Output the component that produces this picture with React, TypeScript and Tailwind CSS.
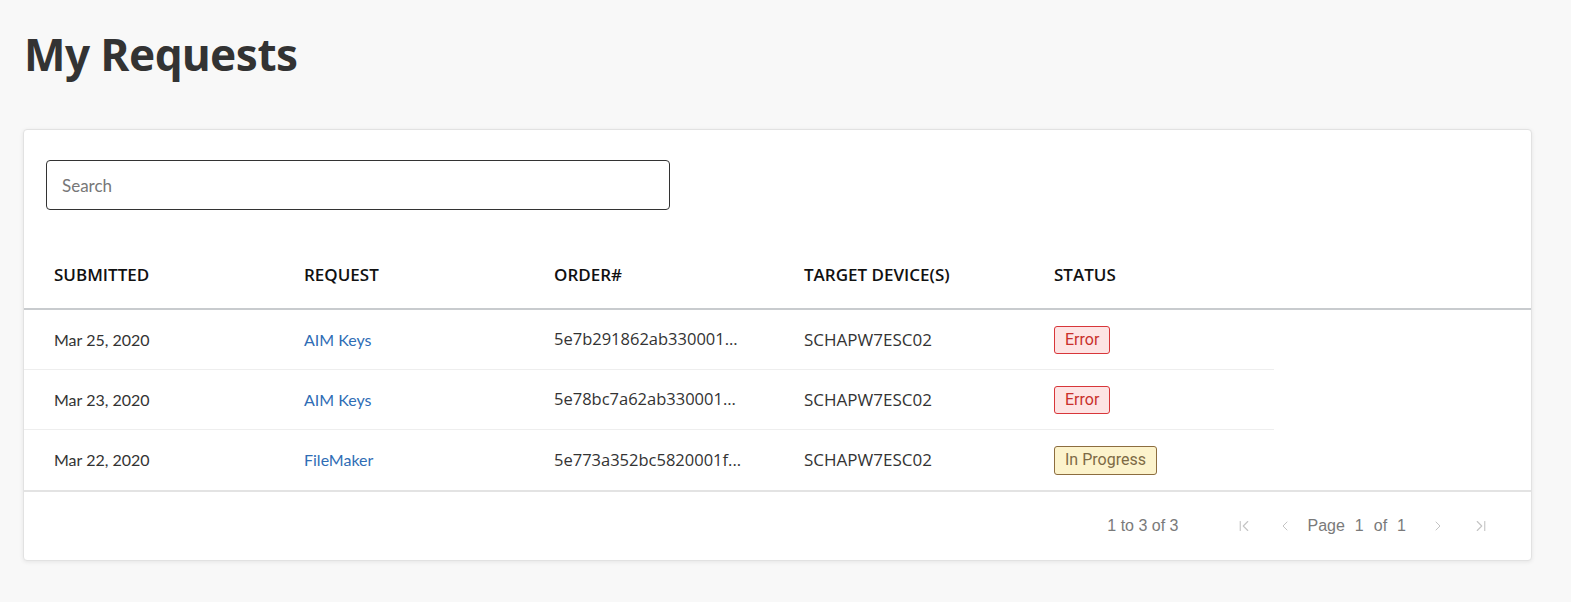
import { ChevronLeft, ChevronRight, ChevronFirst, ChevronLast } from 'lucide-react'

interface RequestRow {
  submitted: string,
  request: string,
  order: string,
  device: string,
  status: 'Error' | 'In Progress',
}

const rows: RequestRow[] = [
  { submitted: 'Mar 25, 2020', request: 'AIM Keys', order: '5e7b291862ab330001...', device: 'SCHAPW7ESC02', status: 'Error' },
  { submitted: 'Mar 23, 2020', request: 'AIM Keys', order: '5e78bc7a62ab330001...', device: 'SCHAPW7ESC02', status: 'Error' },
  { submitted: 'Mar 22, 2020', request: 'FileMaker', order: '5e773a352bc5820001f...', device: 'SCHAPW7ESC02', status: 'In Progress' },
]

const headers = ['SUBMITTED', 'REQUEST', 'ORDER#', 'TARGET DEVICE(S)', 'STATUS']

const StatusBadge = ({ status }: { status: RequestRow['status'] }) => {
  if (status === 'Error') {
    return (
      <span className="inline-flex h-[28px] items-center rounded-[3px] border border-[#d8363a] bg-[#fde4e4] px-[10px] text-[16px] text-[#c9302c] font-['Roboto',sans-serif]">
        Error
      </span>
    )
  }
  return (
    <span className="inline-flex h-[29px] items-center rounded-[3px] border border-[#8c6d3f] bg-[#fcf3cc] px-[10px] text-[16px] text-[#7d6a45] font-['Roboto',sans-serif]">
      In Progress
    </span>
  )
}

const App = () => {
  return (
    <div className="min-h-[602px] w-full bg-[#f8f8f8] pt-[22px] pl-[23px]">
      <h1 className="pl-[1px] text-[44px] leading-[64px] font-bold tracking-[-0.5px] text-[#333333] font-['Noto_Sans',sans-serif]">
        My Requests
      </h1>

      <div className="mt-[43px] w-[1509px] rounded-[4px] border border-[#e2e2e2] bg-white shadow-[0_1px_4px_rgba(0,0,0,0.08)]">
        <div className="pl-[22px] pt-[30px]">
          <input
            name="search-requests"
            type="text"
            placeholder="Search"
            className="h-[50px] w-[624px] rounded-[4px] border border-[#333333] px-[15px] text-[17px] text-[#333] outline-none placeholder:text-[#777777] font-['Lato',sans-serif]"
          />
        </div>

        <div className="mt-[28px] flex h-[72px] items-center border-b-2 border-[#c8cbce]">
          {headers.map((h) => (
            <div key={h} className="w-[250px] pl-[30px] pt-[4px] text-[17px] font-semibold text-[#111111] font-['Open_Sans',sans-serif]">
              {h}
            </div>
          ))}
        </div>

        <div className="w-[1250px]">
          {rows.map((r, i) => (
            <div
              key={r.order}
              className={`flex h-[60px] items-center ${i < rows.length - 1 ? 'border-b border-[#eeeeee]' : ''}`}
            >
              <div className="w-[250px] pl-[30px] text-[16px] text-[#333333] font-['Lato',sans-serif]">{r.submitted}</div>
              <div className="w-[250px] pl-[30px] text-[16px] text-[#2f6db5] font-['Lato',sans-serif]">{r.request}</div>
              <div className="w-[250px] pl-[30px] text-[16.5px] text-[#333333] font-['Open_Sans',sans-serif]">{r.order}</div>
              <div className="w-[250px] pl-[30px] text-[17px] text-[#333333] font-['Open_Sans',sans-serif]">{r.device}</div>
              <div className="w-[250px] pl-[30px]">
                <StatusBadge status={r.status} />
              </div>
            </div>
          ))}
        </div>

        <div className="flex h-[70px] items-center justify-end border-t-2 border-[#e3e3e3] pr-[41px] text-[16px] text-[#7a7a7a] font-['Liberation_Sans',sans-serif]">
          <span>1 to 3 of 3</span>
          <span className="ml-[57px] flex items-center text-[#c4c4c4]">
            <ChevronFirst size={18} strokeWidth={1.5} />
          </span>
          <span className="ml-[24px] flex items-center text-[#c4c4c4]">
            <ChevronLeft size={16} strokeWidth={1.5} />
          </span>
          <span className="ml-[14px]">Page</span>
          <span className="ml-[10px]">1</span>
          <span className="ml-[10px]">of</span>
          <span className="ml-[10px]">1</span>
          <span className="ml-[24px] flex items-center text-[#c4c4c4]">
            <ChevronRight size={16} strokeWidth={1.5} />
          </span>
          <span className="ml-[26px] flex items-center text-[#c4c4c4]">
            <ChevronLast size={18} strokeWidth={1.5} />
          </span>
        </div>
      </div>
    </div>
  )
}

export default App
